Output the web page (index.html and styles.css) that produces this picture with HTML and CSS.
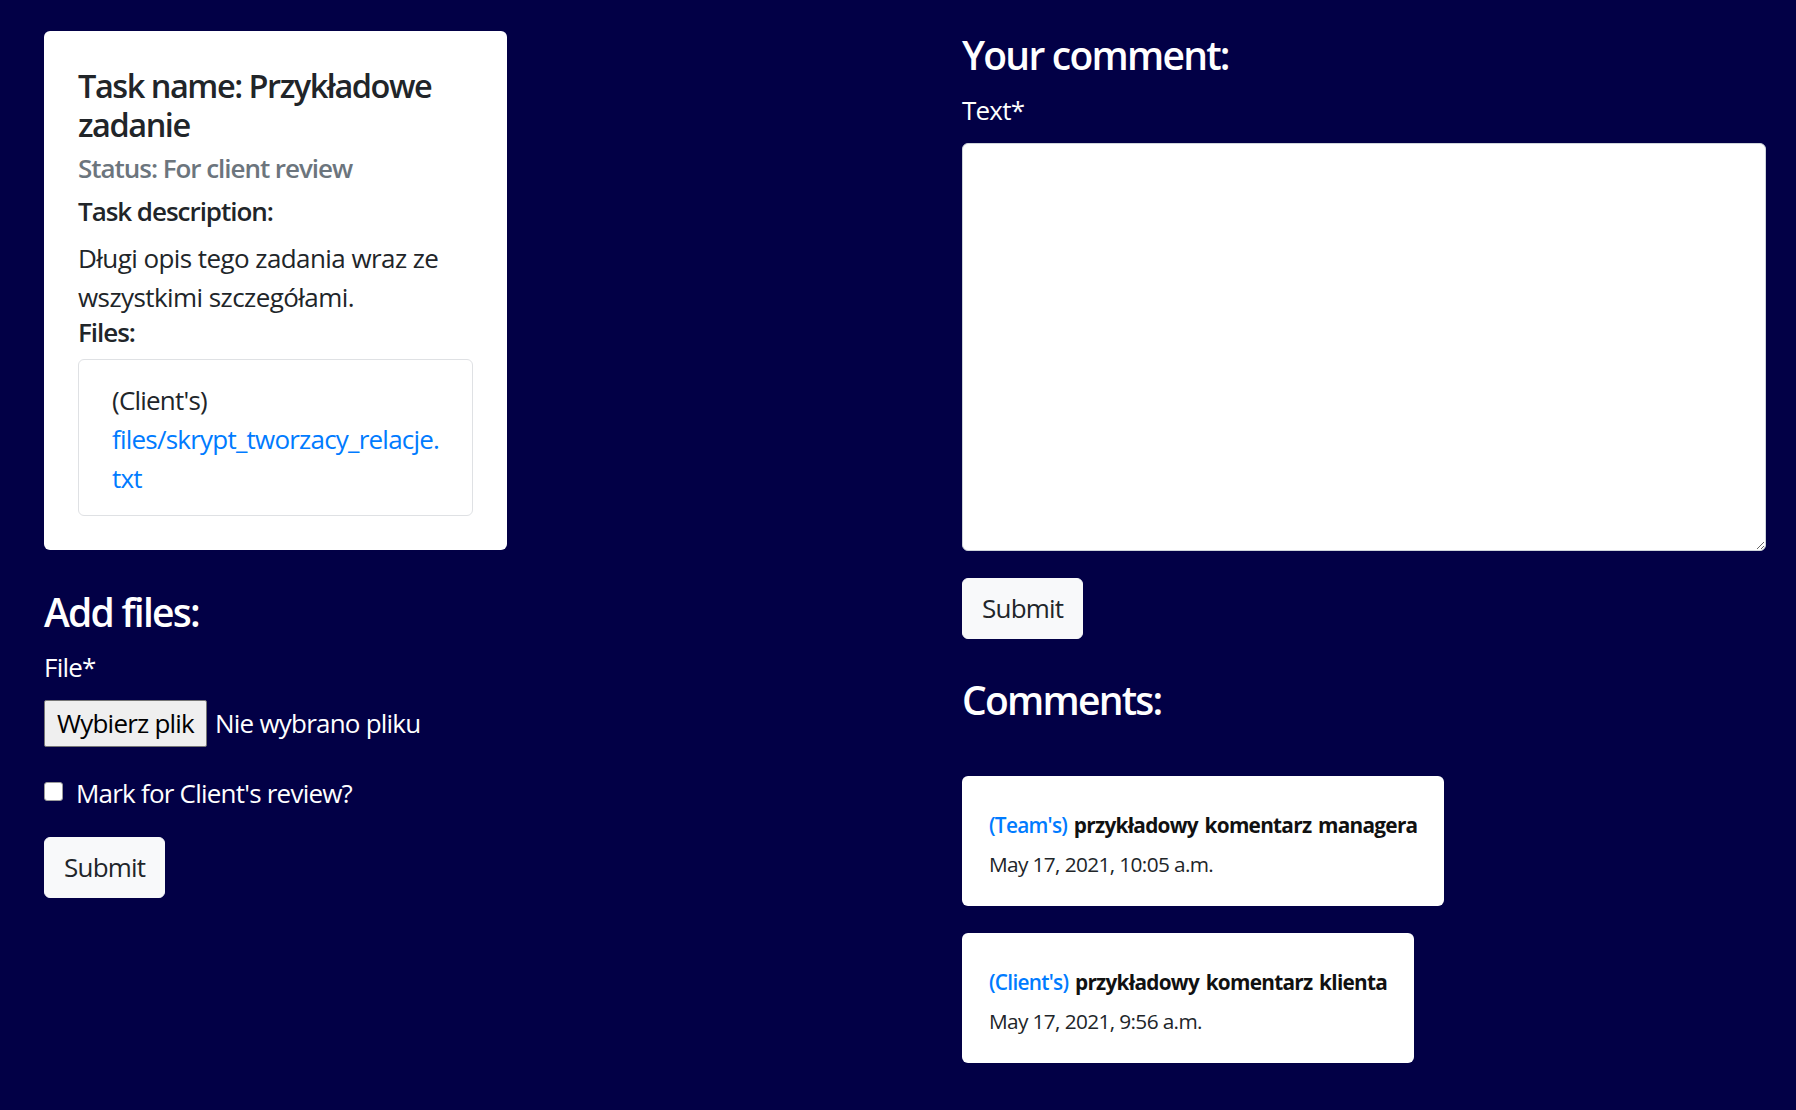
FILE: index.html
```html
<!DOCTYPE html>
<html lang="pl">
<head>
<meta charset="utf-8">
<title>Task details</title>
<link rel="stylesheet" href="styles.css">
</head>
<body>
<main class="page">
  <section class="col">
    <div class="task-card">
      <h5 class="task-title">Task name: Przykładowe zadanie</h5>
      <h6 class="task-status">Status: For client review</h6>
      <h6 class="task-label">Task description:</h6>
      <p class="task-desc">Długi opis tego zadania wraz ze wszystkimi szczegółami.</p>
      <h6 class="files-label">Files:</h6>
      <ul class="file-list">
        <li class="file-item">(Client's) <a class="file-link" href="#">files/skrypt_tworzacy_relacje.<wbr>txt</a></li>
      </ul>
    </div>

    <h4 class="section-title add-title">Add files:</h4>
    <form class="upload-form">
      <label class="field-label">File*</label>
      <div class="file-input">
        <span class="file-btn">Wybierz plik</span>
        <span class="file-none">Nie wybrano pliku</span>
      </div>
      <label class="check-row">
        <span class="checkbox"></span>
        <span class="check-label">Mark for Client's review?</span>
      </label>
      <button type="button" class="btn-light">Submit</button>
    </form>
  </section>

  <section class="col">
    <h4 class="section-title">Your comment:</h4>
    <form class="comment-form">
      <label class="field-label">Text*</label>
      <textarea class="comment-input"></textarea>
      <button type="button" class="btn-light">Submit</button>
    </form>

    <h4 class="section-title comments-title">Comments:</h4>
    <div class="comment-list">
      <div class="comment-card">
        <p class="comment-text"><span class="author">(Team's)</span> przykładowy komentarz managera</p>
        <p class="comment-date">May 17, 2021, 10:05 a.m.</p>
      </div>
      <div class="comment-card">
        <p class="comment-text"><span class="author">(Client's)</span> przykładowy komentarz klienta</p>
        <p class="comment-date">May 17, 2021, 9:56 a.m.</p>
      </div>
    </div>
  </section>
</main>
</body>
</html>
```

FILE: styles.css
```css
* {
  box-sizing: border-box;
}

html,
body {
  margin: 0;
}

body {
  background: #020046;
  font-family: "Open Sans", "Noto Sans", sans-serif;
  font-size: 26px;
  line-height: 39px;
  color: #212529;
  letter-spacing: -0.03em;
}

.page {
  display: grid;
  grid-template-columns: 1fr 1fr;
  column-gap: 114px;
  align-items: start;
  padding: 31px 30px 0 44px;
  min-height: 1110px;
}

.col {
  display: flex;
  flex-direction: column;
  align-items: flex-start;
}

/* Task card */
.task-card {
  width: 463px;
  background: #fff;
  border-radius: 6px;
  padding: 35px 34px 34px;
}

.task-title {
  font-size: 32.5px;
  line-height: 39px;
  font-weight: 600;
  letter-spacing: -0.045em;
  margin: 0 0 9px;
}

.task-status,
.task-label,
.files-label {
  font-size: 26px;
  line-height: 31px;
  font-weight: 600;
  letter-spacing: -0.04em;
  margin: 0;
}

.task-status {
  color: #6c757d;
  margin-bottom: 12px;
}

.task-desc {
  margin: 12px 0 0;
  letter-spacing: -0.022em;
}

.files-label {
  margin-bottom: 11px;
}

.file-list {
  list-style: none;
  margin: 0;
  padding: 0;
}

.file-item {
  border: 1px solid #dfe1e4;
  border-radius: 6px;
  padding: 20.5px 33px 17.5px;
}

.file-link {
  color: #007bff;
  text-decoration: none;
}

/* Headings */
.section-title {
  color: #fff;
  font-size: 39px;
  line-height: 47px;
  font-weight: 600;
  letter-spacing: -0.045em;
  margin: 0 0 13px;
}

.add-title {
  margin-top: 38px;
}

.comments-title {
  margin-top: 37px;
  margin-bottom: 53px;
}

.field-label {
  display: block;
  color: #fff;
  margin-bottom: 13px;
}

/* Upload form */
.upload-form,
.comment-form {
  display: flex;
  flex-direction: column;
  align-items: flex-start;
  width: 100%;
}

.file-input {
  display: flex;
  align-items: center;
  gap: 8px;
  height: 47px;
  margin-bottom: 26.5px;
}

.file-btn {
  display: flex;
  align-items: center;
  height: 47px;
  padding: 0 12px;
  background: #efefef;
  border: 1px solid #767676;
  border-radius: 2px;
  color: #000;
}

.file-none {
  color: #fff;
}

.check-row {
  display: flex;
  align-items: flex-start;
  gap: 13px;
  color: #fff;
  margin-bottom: 24.5px;
}

.checkbox {
  width: 19px;
  height: 19px;
  margin-top: 8.5px;
  background: #fff;
  border: 1px solid #9a9a9a;
  border-radius: 3px;
}

.btn-light {
  font-family: inherit;
  font-size: 26px;
  line-height: 39px;
  letter-spacing: inherit;
  color: #212529;
  background: #f8f9fa;
  border: 1.5px solid #f8f9fa;
  border-radius: 6px;
  padding: 10px 19px;
  height: 61px;
  cursor: pointer;
}

/* Comment form */
.comment-input {
  display: block;
  width: 100%;
  height: 408px;
  background: #fff;
  border: 1.5px solid #ced4da;
  border-radius: 6px;
  margin: 0 0 27px;
  padding: 10px 19px;
  font-family: inherit;
  font-size: 26px;
}

/* Comments */
.comment-list {
  display: flex;
  flex-direction: column;
  align-items: flex-start;
  gap: 27px;
}

.comment-card {
  background: #fff;
  border-radius: 6px;
  padding: 34px 27px 26px 27px;
  font-size: 20.8px;
  line-height: 31px;
}

.comment-text {
  margin: 0 0 8px;
  font-weight: 700;
  color: #111;
  letter-spacing: -0.035em;
  word-spacing: 2px;
}

.author {
  color: #007bff;
  font-weight: 600;
}

.comment-date {
  margin: 0;
  color: #212529;
  letter-spacing: -0.03em;
}
```
